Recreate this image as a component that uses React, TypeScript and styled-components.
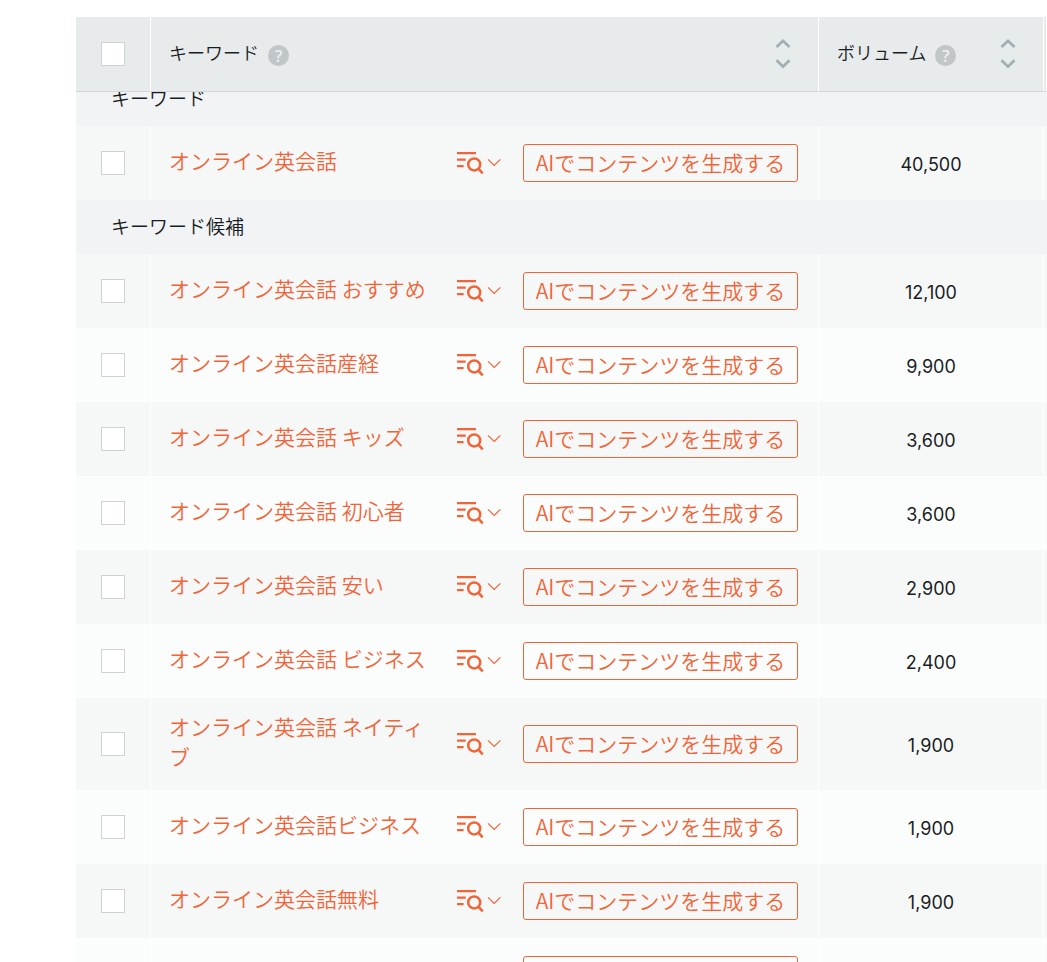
import React from "react";
import styled, { createGlobalStyle } from "styled-components";

const ORANGE = "#f26437";
const TEXT_WEIGHT = 350;

const GlobalStyle = createGlobalStyle`
  *, *::before, *::after { box-sizing: border-box; }
  body {
    margin: 0;
    background: #fff;
    color: #1a1d1f;
    font-family: "Noto Sans CJK JP", sans-serif;
    font-weight: ${TEXT_WEIGHT};
  }
`;

const Page = styled.main`
  height: 100vh;
  overflow: hidden;
  padding: 17px 0 0 76px;
`;

const Table = styled.table`
  width: 100%;
  table-layout: fixed;
  border-collapse: separate;
  border-spacing: 0;
`;

const Col = styled.col<{ $width?: number }>`
  width: ${(p) => (p.$width ? `${p.$width}px` : "auto")};
`;

const HeadCell = styled.th`
  height: 75px;
  padding: 0;
  background: #e7ebec;
  border-right: 1px solid #fff;
  border-bottom: 1px solid #d0d5d7;
  font-size: 18px;
  font-weight: ${TEXT_WEIGHT};
  text-align: left;
`;

const HeadContent = styled.div`
  display: flex;
  align-items: center;
  padding: 0 27px 0 18px;
`;

const HeadLabel = styled.span`
  line-height: 24px;
  padding-bottom: 4px;
  margin-right: 9px;
`;

const HelpButton = styled.button`
  width: 21px;
  height: 21px;
  padding: 0;
  margin-top: 3px;
  border: 0;
  border-radius: 50%;
  background: #c1c6c8;
  color: #edf0f1;
  font: 600 17px/21px "Open Sans", sans-serif;
  text-align: center;
`;

const SortButton = styled.button`
  display: flex;
  margin-left: auto;
  padding: 0;
  border: 0;
  background: none;
`;

const Center = styled.div`
  display: flex;
  justify-content: center;
  align-items: center;
`;

const Checkbox = styled.input`
  appearance: none;
  display: block;
  width: 24px;
  height: 24px;
  margin: 0;
  border: 1px solid #cfd2d3;
  background: #fff;
`;

const GroupCell = styled.th`
  padding: 0;
  background: #f1f3f5;
  font-size: 19px;
  font-weight: ${TEXT_WEIGHT};
  text-align: left;
`;

const GroupLabel = styled.div<{ $scrolled?: boolean }>`
  display: flex;
  align-items: flex-end;
  height: ${(p) => (p.$scrolled ? 34 : 54)}px;
  overflow: hidden;
  padding: 0 0 2px 35px;
  line-height: 52px;
`;

const Row = styled.tr<{ $light?: boolean }>`
  background: ${(p) => (p.$light ? "#fbfdfd" : "#f6f8f8")};
`;

const Cell = styled.td`
  height: 74px;
  padding: 13px 0;
  border-right: 1px solid #fff;
  vertical-align: middle;
`;

const KeywordContent = styled.div`
  display: flex;
  align-items: center;
  padding: 0 20px 0 18px;
`;

const KeywordText = styled.div`
  flex: 1;
  min-width: 0;
  padding-bottom: 6px;
  font-size: 21px;
  line-height: 30px;
`;

const KeywordLink = styled.a`
  color: ${ORANGE};
  text-decoration: none;
`;

const SearchMenuButton = styled.button`
  display: flex;
  flex: none;
  margin: 0 22px 0 16px;
  padding: 0;
  border: 0;
  background: none;
  color: ${ORANGE};
`;

const GenerateButton = styled.button`
  flex: none;
  width: 275px;
  height: 38px;
  padding: 0 0 2px;
  border: 1px solid ${ORANGE};
  border-radius: 3px;
  background: transparent;
  color: ${ORANGE};
  font: ${TEXT_WEIGHT} 21px/34px "Noto Sans CJK JP", sans-serif;
  white-space: nowrap;
`;

const Volume = styled.div`
  padding-top: 4px;
  font: 400 18px/24px Inter, sans-serif;
  text-align: center;
`;

const SortIcon = () => (
  <svg width="16" height="34" viewBox="0 0 16 34" fill="none" stroke="#a0afb3" strokeWidth="2.7">
    <path d="M1.5 10 8 3.8 14.5 10M1.5 23.2 8 29.6 14.5 23.2" />
  </svg>
);

const SearchListIcon = () => (
  <svg width="45" height="26" viewBox="0 0 45 26" fill="none" stroke="currentColor">
    <path d="M1 3.1h19M1 9.6h8.7M1 16.1h6.6" strokeWidth="2.2" />
    <circle cx="18.2" cy="14.4" r="6" strokeWidth="2.5" />
    <path d="m22.4 18.7 4.3 4.6" strokeWidth="2.5" />
    <path d="m32 9.3 6.2 6.2 6.2-6.2" strokeWidth="1.2" />
  </svg>
);

type Keyword = { text: string; volume: string };

const MAIN: Keyword = { text: "オンライン英会話", volume: "40,500" };

const CANDIDATES: Keyword[] = [
  { text: "オンライン英会話 おすすめ", volume: "12,100" },
  { text: "オンライン英会話産経", volume: "9,900" },
  { text: "オンライン英会話 キッズ", volume: "3,600" },
  { text: "オンライン英会話 初心者", volume: "3,600" },
  { text: "オンライン英会話 安い", volume: "2,900" },
  { text: "オンライン英会話 ビジネス", volume: "2,400" },
  { text: "オンライン英会話 ネイティブ", volume: "1,900" },
  { text: "オンライン英会話ビジネス", volume: "1,900" },
  { text: "オンライン英会話無料", volume: "1,900" },
  { text: "", volume: "" },
];

const SortableHead = ({ label }: { label: string }) => (
  <HeadCell scope="col">
    <HeadContent>
      <HeadLabel>{label}</HeadLabel>
      <HelpButton type="button">?</HelpButton>
      <SortButton type="button" aria-label={label}>
        <SortIcon />
      </SortButton>
    </HeadContent>
  </HeadCell>
);

const KeywordRow = ({ item, light }: { item: Keyword; light?: boolean }) => (
  <Row $light={light}>
    <Cell>
      <Center>
        {item.text && <Checkbox type="checkbox" aria-label={item.text} />}
      </Center>
    </Cell>
    <Cell>
      <KeywordContent>
        <KeywordText>
          {item.text && <KeywordLink href="#">{item.text}</KeywordLink>}
        </KeywordText>
        {item.text && (
          <SearchMenuButton type="button" aria-label={item.text}>
            <SearchListIcon />
          </SearchMenuButton>
        )}
        <GenerateButton type="button">AIでコンテンツを生成する</GenerateButton>
      </KeywordContent>
    </Cell>
    <Cell>
      <Volume>{item.volume}</Volume>
    </Cell>
    <td />
  </Row>
);

export default function App() {
  return (
    <>
      <GlobalStyle />
      <Page>
        <Table>
          <colgroup>
            <Col $width={75} />
            <Col />
            <Col $width={225} />
            <Col $width={3} />
          </colgroup>
          <thead>
            <tr>
              <HeadCell scope="col">
                <Center>
                  <Checkbox type="checkbox" aria-label="キーワード" />
                </Center>
              </HeadCell>
              <SortableHead label="キーワード" />
              <SortableHead label="ボリューム" />
              <HeadCell as="td" />
            </tr>
          </thead>
          <tbody>
            <tr>
              <GroupCell colSpan={4} scope="rowgroup">
                <GroupLabel $scrolled>キーワード</GroupLabel>
              </GroupCell>
            </tr>
            <KeywordRow item={MAIN} />
          </tbody>
          <tbody>
            <tr>
              <GroupCell colSpan={4} scope="rowgroup">
                <GroupLabel>キーワード候補</GroupLabel>
              </GroupCell>
            </tr>
            {CANDIDATES.map((item, i) => (
              <KeywordRow key={i} item={item} light={i % 2 === 1} />
            ))}
          </tbody>
        </Table>
      </Page>
    </>
  );
}
